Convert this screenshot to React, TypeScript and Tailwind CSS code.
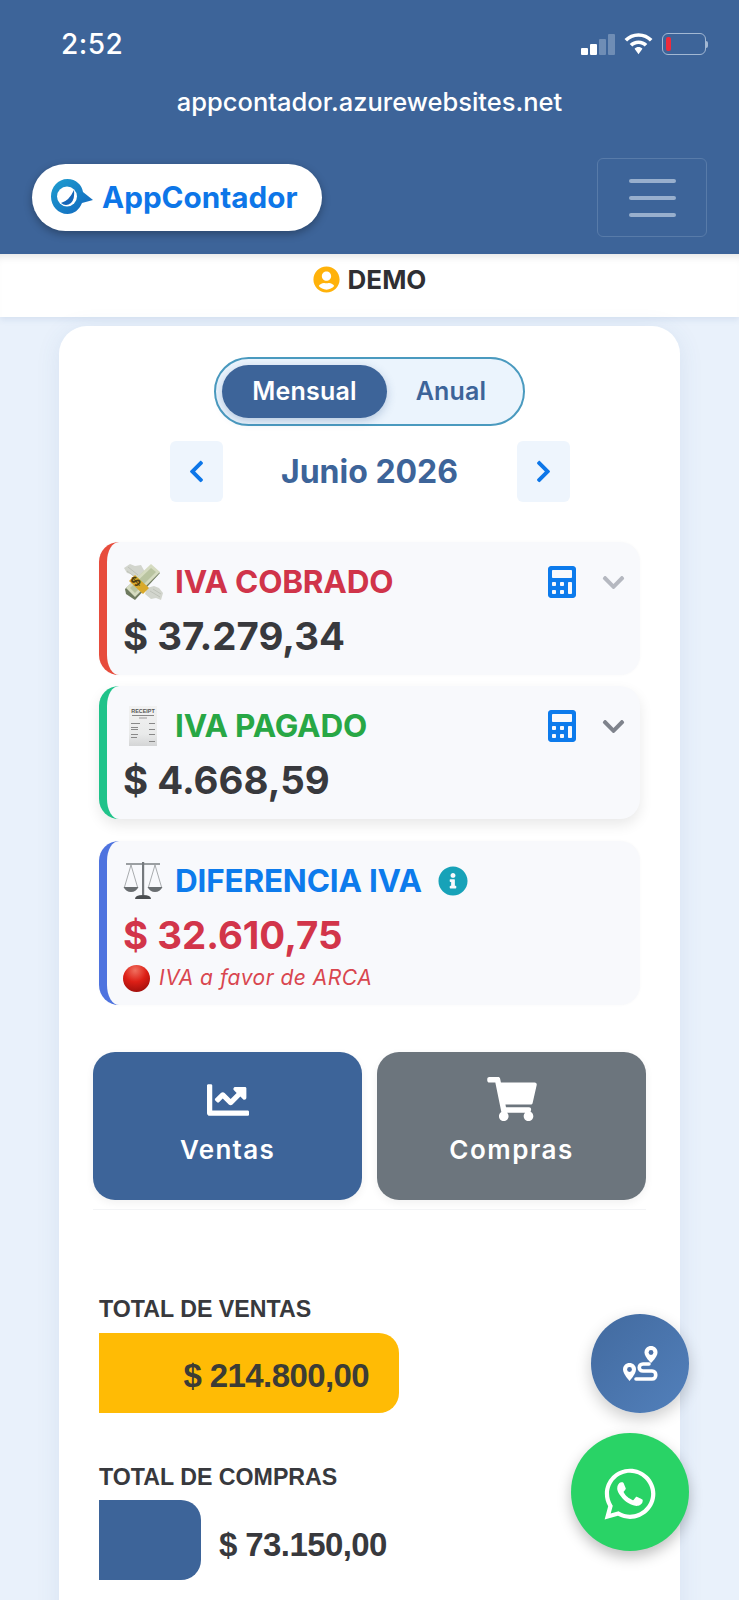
import React from "react";
import { FaCalculator, FaChevronDown, FaChevronLeft, FaChevronRight, FaChartLine, FaShoppingCart, FaInfoCircle, FaWhatsapp, FaUserCircle } from "react-icons/fa";

const MoneyWings = () => (
  <svg width="40" height="40" viewBox="0 0 40 40" className="shrink-0">
    <path d="M1 6 L7 2 L12 4 L18 3 L22 10 L13 17 L8 12 L4 11Z" fill="#d2d5cd" />
    <path d="M5 5 L15 13 M4 9 L12 15" stroke="#b9bcb4" strokeWidth="0.8" />
    <path d="M24 26 L31 24 L36 26 L40 31 L38 38 L33 36 L28 37 L22 32Z" fill="#d2d5cd" />
    <path d="M27 29 L37 35 M30 27 L38 32" stroke="#b9bcb4" strokeWidth="0.8" />
    <path d="M2 27 L28 3 L37 11 L12 38 L3 32Z" fill="#6e7a5f" />
    <path d="M3 26 L28 2 L37 10 L12 35Z" fill="#d5dbc0" />
    <path d="M7 26 L28 6 L33 10 L12 31Z" fill="#b9c4a0" />
    <path d="M12 13 L26 26 L20 32 L6 19Z" fill="#d9a92b" />
    <text x="0" y="0" transform="translate(13 25.5) rotate(-42)" fontSize="14" fontWeight="700" fontFamily="Liberation Sans" fill="#4d3d12">$</text>
  </svg>
);

const Receipt = () => (
  <svg width="40" height="40" viewBox="0 0 40 40" className="shrink-0">
    <defs>
      <linearGradient id="rc" x1="0" y1="0" x2="0" y2="1">
        <stop offset="0%" stopColor="#f2f2f2" />
        <stop offset="70%" stopColor="#e9eaea" />
        <stop offset="100%" stopColor="#d4d5d6" />
      </linearGradient>
    </defs>
    <rect x="6" y="0" width="28" height="40" fill="url(#rc)" />
    <text x="20" y="7" textAnchor="middle" fontSize="5.4" fontWeight="700" fontFamily="Liberation Sans" fill="#555">RECEIPT</text>
    <rect x="9" y="9" width="22" height="1" fill="#888" />
    <rect x="16" y="11.5" width="8" height="1" fill="#999" />
    <rect x="8" y="17" width="9" height="1" fill="#888" /><rect x="26" y="17" width="6" height="1" fill="#888" />
    <rect x="8" y="21" width="7" height="1" fill="#888" /><rect x="26" y="23" width="6" height="1" fill="#888" />
    <rect x="8" y="23" width="7" height="1" fill="#888" />
    <rect x="8" y="28" width="7" height="1" fill="#888" /><rect x="26" y="28" width="6" height="1" fill="#888" />
    <rect x="8" y="31" width="6" height="1" fill="#888" /><rect x="26" y="35" width="6" height="1" fill="#888" />
  </svg>
);

const Scales = () => (
  <svg width="40" height="40" viewBox="0 0 40 40" className="shrink-0">
    <path d="M3 3 L37 3" stroke="#7d8185" strokeWidth="1.4" />
    <rect x="19" y="1" width="2.2" height="33" fill="#75797d" />
    <path d="M12 38 Q12 34 20 34 Q28 34 28 38Z" fill="#4a4d50" />
    <path d="M8 4 L1.5 26 M8 4 L14.5 26 M32 4 L25.5 26 M32 4 L38.5 26" stroke="#94989b" strokeWidth="0.8" fill="none" />
    <path d="M0.5 26 H15.5 Q13 31 8 31 Q3 31 .5 26Z" fill="#6a6e71" />
    <path d="M24.5 26 H39.5 Q37 31 32 31 Q27 31 24.5 26Z" fill="#6a6e71" />
  </svg>
);

const RedBall = () => (
  <svg width="27" height="27" viewBox="0 0 27 27" className="shrink-0">
    <defs>
      <radialGradient id="rb" cx="45%" cy="20%" r="85%">
        <stop offset="0%" stopColor="#f0705f" />
        <stop offset="50%" stopColor="#dd1f16" />
        <stop offset="100%" stopColor="#9c0e0b" />
      </radialGradient>
    </defs>
    <circle cx="13.5" cy="13.5" r="13.5" fill="url(#rb)" />
  </svg>
);

const Logo = () => (
  <svg width="42" height="38" viewBox="0 0 42 38">
    <defs>
      <linearGradient id="lg" x1="0" y1="0" x2="1" y2="1">
        <stop offset="0%" stopColor="#1f9fd0" />
        <stop offset="100%" stopColor="#1164bd" />
      </linearGradient>
    </defs>
    <path d="M16.5 0 C25 0 31 6 32 13 L42 21 L31 24 C28 31 23 35 16.5 35 C7 35 0 27 0 17.5 C0 8 7 0 16.5 0Z" fill="url(#lg)" />
    <circle cx="16" cy="17.5" r="10" fill="#fff" />
    <path d="M23 11 Q24 20 20 24 Q15 28 10 24 Q18 22 23 11Z" fill="#1565b8" />
  </svg>
);

const RouteIcon = () => (
  <svg width="35" height="36" viewBox="0 0 35 36" fill="none">
    <path d="M6.5 17 C3 17 0 19.5 0 23.5 C0 28 6.5 35 6.5 35 C6.5 35 13 28 13 23.5 C13 19.5 10 17 6.5 17Z" fill="#fff" />
    <circle cx="6.5" cy="23.5" r="2.4" fill="#4a70a8" />
    <path d="M28 0 C24.5 0 21.5 2.5 21.5 6.5 C21.5 11 28 17 28 17 C28 17 34.5 11 34.5 6.5 C34.5 2.5 31.5 0 28 0Z" fill="#fff" />
    <circle cx="28" cy="6.5" r="2.4" fill="#4a70a8" />
    <path d="M26 18 H20 C15 18 15 25 20 25 H29 C34 25 34 33 29 33 H13" stroke="#fff" strokeWidth="3.6" strokeLinecap="round" />
  </svg>
);

const Battery = () => (
  <div className="flex items-center">
    <div className="w-[44px] h-[22px] rounded-[6px] border border-[#a3b8d3] flex items-center pl-[3px]">
      <div className="w-[5px] h-[14px] rounded-[2px] bg-[#ee2b3c]" />
    </div>
    <div className="w-[2px] h-[7px] bg-[#a3b8d3] rounded-r" />
  </div>
);

const Wifi = () => (
  <svg width="29" height="22" viewBox="0 0 28 21" fill="#fff">
    <path d="M14 0 C8.5 0 4 2.2 0.5 5.6 L3 8.2 C5.8 5.4 9.6 3.6 14 3.6 C18.4 3.6 22.2 5.4 25 8.2 L27.5 5.6 C24 2.2 19.5 0 14 0Z" />
    <path d="M14 7 C10.6 7 7.7 8.3 5.5 10.5 L8 13 C9.6 11.5 11.6 10.6 14 10.6 C16.4 10.6 18.4 11.5 20 13 L22.5 10.5 C20.3 8.3 17.4 7 14 7Z" />
    <path d="M14 13.5 C12.5 13.5 11.2 14 10.2 15 L14 20.5 L17.8 15 C16.8 14 15.5 13.5 14 13.5Z" />
  </svg>
);

const Signal = () => (
  <div className="flex items-end gap-[2px] h-[21px]">
    <div className="w-[7px] h-[7px] bg-white rounded-[1px]" />
    <div className="w-[7px] h-[11px] bg-white rounded-[1px]" />
    <div className="w-[7px] h-[16px] bg-[#6f8db5] rounded-[1px]" />
    <div className="w-[7px] h-[21px] bg-[#6f8db5] rounded-[1px]" />
  </div>
);

type CardProps = {
  border: string;
  icon: React.ReactNode;
  title: string;
  titleColor: string;
  amount: string;
  amountColor: string;
  chevron?: string;
  info?: boolean;
  note?: boolean;
  shadow?: boolean;
  height: string;
};

const IvaCard = ({ border, icon, title, titleColor, amount, amountColor, chevron, info, note, shadow, height }: CardProps) => (
  <div className={`${border} ${height} ${shadow ? "shadow-[0_6px_14px_rgba(0,0,0,0.09)]" : "shadow-[0_0_3px_rgba(0,0,0,0.03)]"} rounded-[20px] border-l-[8px] bg-[#f8f9fc] pl-[16px] pr-[14px] pt-[20px]`}>
    <div className="flex items-center h-[40px]">
      {icon}
      <span className={`${titleColor} ml-[12px] text-[31.5px] font-bold tracking-[-0.2px] leading-none`}>{title}</span>
      {info && <FaInfoCircle className="ml-[16px] text-[#17a2b8] text-[30px]" />}
      {chevron && (
        <div className="ml-auto flex items-center gap-[23px]">
          <FaCalculator className="text-[#0d7bec] text-[32px]" />
          <FaChevronDown className={`${chevron} text-[25px]`} />
        </div>
      )}
    </div>
    <div className={`${amountColor} mt-[10px] text-[38.4px] font-bold leading-[48px]`}>{amount}</div>
    {note && (
      <div className="flex items-center gap-[9px] mt-[5px] h-[28px]">
        <RedBall />
        <span className="text-[#d9464f] text-[21px] italic tracking-[0.5px]">IVA a favor de ARCA</span>
      </div>
    )}
  </div>
);

export default function App() {
  return (
    <div className="relative h-[1600px] w-[739px] overflow-hidden bg-[#e9f1fb] font-['Inter','Liberation_Sans',sans-serif]">
      <header className="h-[254px] bg-[#3d6499] text-white">
        <div className="flex items-center justify-between pl-[61px] pr-[31px] pt-[14px] h-[74px]">
          <span className="text-[28px] font-medium tracking-[0.5px]">2:52</span>
          <div className="flex items-center gap-[9px]">
            <Signal />
            <Wifi />
            <Battery />
          </div>
        </div>
        <div className="text-center text-[25.5px] leading-[32px] font-medium tracking-[0px] mt-[12px]">appcontador.azurewebsites.net</div>
        <div className="flex items-center justify-between pl-[32px] pr-[32px] mt-[40px]">
          <div className="flex items-center h-[67px] w-[290px] rounded-full bg-white pl-[19px] gap-[9px] shadow-[0_3px_8px_rgba(0,0,0,0.3)]">
            <Logo />
            <span className="text-[#0d76e8] text-[29.7px] font-bold tracking-[0px]">AppContador</span>
          </div>
          <div className="flex flex-col items-center justify-center gap-[13px] w-[110px] h-[79px] rounded-[6px] border border-[#587ba9]">
            <div className="h-[4px] w-[47px] bg-[#98afcd] rounded-full" />
            <div className="h-[4px] w-[47px] bg-[#98afcd] rounded-full" />
            <div className="h-[4px] w-[47px] bg-[#98afcd] rounded-full" />
          </div>
        </div>
      </header>

      <div className="flex h-[63px] items-start justify-center gap-[8px] bg-white pt-[12px] shadow-[inset_0_8px_8px_-6px_rgba(0,0,0,0.12),0_3px_6px_rgba(61,100,153,0.10)]">
        <FaUserCircle className="text-[#ffb20a] text-[27px]" />
        <span className="text-[#2f2f33] text-[26px] font-bold leading-[28px]">DEMO</span>
      </div>

      <main className="mx-auto mt-[9px] w-[621px] h-[1400px] rounded-[28px] bg-white px-[40px] pt-[31px] shadow-[0_4px_24px_rgba(61,100,153,0.10)]">
        <div className="mx-auto flex h-[69px] w-[311px] items-center rounded-full border-2 border-[#4a9abf] bg-[#ebf4fd] pl-[6px]">
          <div className="flex h-[53px] w-[165px] items-center justify-center rounded-full bg-[#3d6499] text-white text-[25px] font-semibold tracking-[0.2px] shadow-[0_3px_10px_rgba(61,100,153,0.3)]">Mensual</div>
          <div className="flex-1 pr-[8px] text-center text-[#3d6499] text-[25px] font-semibold tracking-[0.2px]">Anual</div>
        </div>

        <div className="mx-auto mt-[15px] flex w-[400px] items-center justify-between">
          <div className="flex h-[61px] w-[53px] items-center justify-center rounded-[6px] bg-[#eef5fd]">
            <FaChevronLeft className="text-[#0d76e8] text-[25px]" />
          </div>
          <span className="text-[#3d6499] text-[32px] font-bold">Junio 2026</span>
          <div className="flex h-[61px] w-[53px] items-center justify-center rounded-[6px] bg-[#eef5fd]">
            <FaChevronRight className="text-[#0d76e8] text-[25px]" />
          </div>
        </div>

        <div className="mt-[40px] flex flex-col">
          <IvaCard border="border-[#e74c3c]" height="h-[133px]" icon={<MoneyWings />} title="IVA COBRADO" titleColor="text-[#d0344a]" amount="$ 37.279,34" amountColor="text-[#38393d]" chevron="text-[#b5b8c0]" />
          <div className="h-[11px]" />
          <IvaCard border="border-[#20c38a]" height="h-[133px]" icon={<Receipt />} title="IVA PAGADO" titleColor="text-[#28a745]" amount="$ 4.668,59" amountColor="text-[#38393d]" chevron="text-[#7f838c]" shadow />
          <div className="h-[22px]" />
          <IvaCard border="border-[#4e73df]" height="h-[164px]" icon={<Scales />} title="DIFERENCIA IVA" titleColor="text-[#0d7bec]" amount="$ 32.610,75" amountColor="text-[#d2354a]" info note />
        </div>

        <div className="-mx-[6px] mt-[47px] flex gap-[15px] pb-[9px] border-b border-[#f3f4f6]">
          <div className="flex h-[148px] flex-1 flex-col items-center rounded-[22px] bg-[#3d6499] pt-[27px] text-white shadow-[0_3px_8px_rgba(0,0,0,0.06)]">
            <FaChartLine className="text-[46px] h-[42px]" />
            <span className="mt-[13px] text-[26px] font-semibold tracking-[1.3px] leading-[32px]">Ventas</span>
          </div>
          <div className="flex h-[148px] flex-1 flex-col items-center rounded-[22px] bg-[#6c757d] pt-[25px] text-white shadow-[0_3px_8px_rgba(0,0,0,0.06)]">
            <FaShoppingCart className="text-[50px] h-[44px]" />
            <span className="mt-[13px] text-[26px] font-semibold tracking-[1.5px] leading-[32px]">Compras</span>
          </div>
        </div>

        <section className="mt-[85px] font-['Liberation_Sans',sans-serif]">
          <div className="text-[#38393d] text-[23.2px] font-bold leading-[28px]">TOTAL DE VENTAS</div>
          <div className="mt-[10px] flex h-[80px] w-[300px] items-center justify-end rounded-r-[20px] bg-[#ffbb05] pr-[30px] pt-[6px] text-[#3c3c35] text-[33px] font-bold tracking-[-0.6px]">$ 214.800,00</div>
          <div className="mt-[50px] text-[#38393d] text-[23.2px] font-bold leading-[28px]">TOTAL DE COMPRAS</div>
          <div className="mt-[9px] flex items-center gap-[18px]">
            <div className="h-[80px] w-[102px] rounded-r-[20px] bg-[#3d6499]" />
            <span className="pt-[10px] text-[#38393d] text-[33px] font-bold tracking-[-0.6px]">$ 73.150,00</span>
          </div>
        </section>
      </main>

      <div className="absolute left-[591px] top-[1314px] flex h-[99px] w-[98px] items-center justify-center rounded-full bg-gradient-to-br from-[#426a9f] to-[#5280bb] shadow-[0_6px_16px_rgba(0,0,0,0.2)]">
        <RouteIcon />
      </div>
      <div className="absolute left-[571px] top-[1433px] flex h-[118px] w-[118px] items-center justify-center rounded-full bg-[#29d366] pt-[4px] shadow-[0_6px_14px_rgba(0,0,0,0.25)]">
        <FaWhatsapp className="text-white text-[58px]" />
      </div>
    </div>
  );
}
